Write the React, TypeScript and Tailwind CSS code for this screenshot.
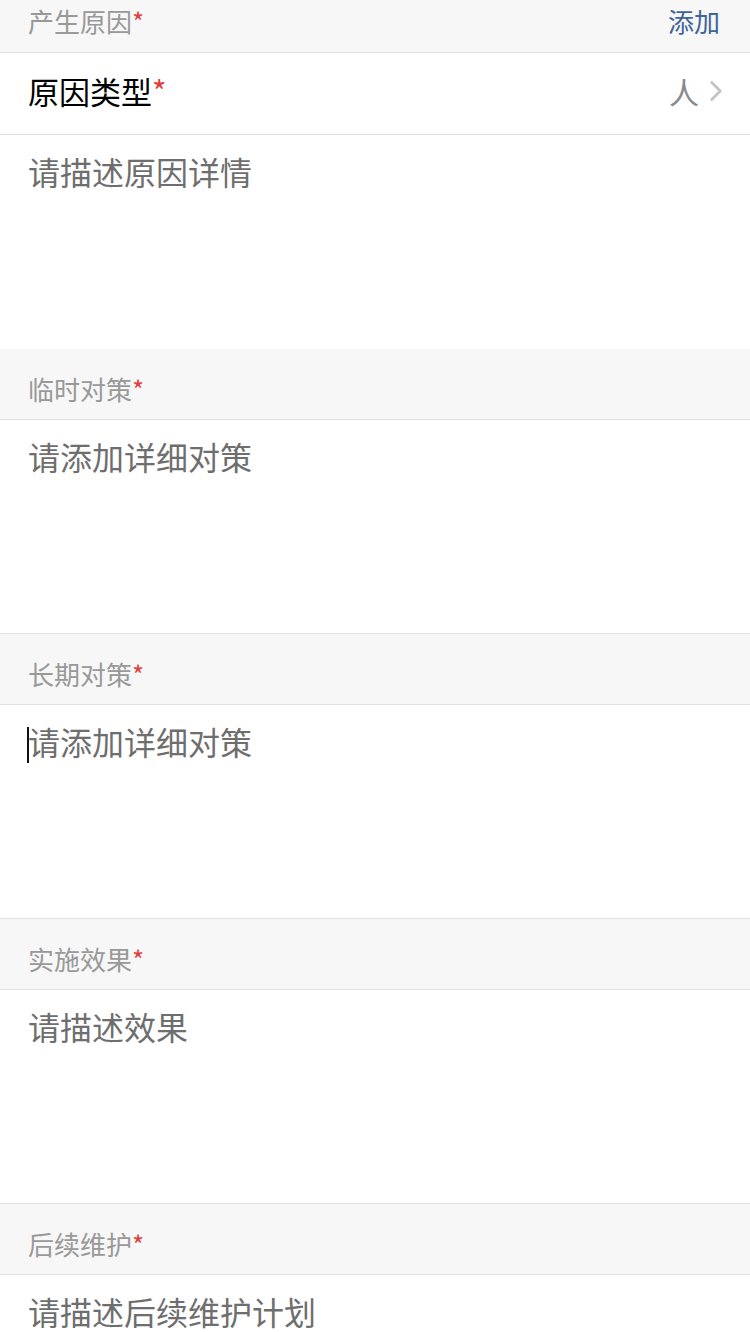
import { ChevronRight } from "lucide-react";

const font = { fontFamily: '"Noto Sans CJK SC", "Noto Sans", sans-serif' };

function Star() {
  return <span className="text-[#e0403a]">*</span>;
}

function SectionHeader({ title, top = false }: { title: string; top?: boolean }) {
  return (
    <div
      className={
        "h-[71px] bg-[#f7f7f7] border-b border-[#e0e0e0] px-[28px] pt-[22px] text-[26px] leading-[36px] text-[#999999]" +
        (top ? " border-t" : "")
      }
    >
      {title}
      <Star />
    </div>
  );
}

function Area({ placeholder, cursor = false, first = false }: { placeholder: string; cursor?: boolean; first?: boolean }) {
  return (
    <div
      className={
        "bg-white px-[28px] pt-[16px] text-[32px] leading-[40px] text-[#6e6e6e]" +
        (first ? " h-[214px]" : " h-[213px]")
      }
    >
      {cursor && <span className="inline-block w-[2px] h-[36px] bg-[#111] align-[-8px] -ml-[1px] -mr-[1px]" />}
      {placeholder}
    </div>
  );
}

export default function App() {
  return (
    <div className="w-[750px] h-[1332px] overflow-hidden bg-white" style={font}>
      <div className="h-[53px] bg-[#f7f7f7] border-b border-[#e0e0e0] px-[28px] pt-[3px] flex justify-between text-[26px] leading-[36px]">
        <div className="text-[#999999]">
          产生原因
          <Star />
        </div>
        <div className="text-[#3d6498] pr-[2px]">添加</div>
      </div>
      <div className="h-[82px] border-b border-[#e0e0e0] pl-[28px] pr-[28px] flex items-center justify-between">
        <div className="text-[31px] leading-[40px] text-black -mt-[6px]">
          原因类型
          <Star />
        </div>
        <div className="flex items-center -mt-[6px]">
          <span className="text-[30px] leading-[40px] text-[#8a8a8a]">人</span>
          <ChevronRight className="w-[34px] h-[34px] text-[#c4c4c8] -mr-[11px]" strokeWidth={2} />
        </div>
      </div>
      <Area placeholder="请描述原因详情" first />
      <SectionHeader title="临时对策" />
      <div className="border-b border-[#e0e0e0]">
        <Area placeholder="请添加详细对策" />
      </div>
      <SectionHeader title="长期对策" />
      <div className="border-b border-[#e0e0e0]">
        <Area placeholder="请添加详细对策" cursor />
      </div>
      <SectionHeader title="实施效果" />
      <div className="border-b border-[#e0e0e0]">
        <Area placeholder="请描述效果" />
      </div>
      <SectionHeader title="后续维护" />
      <Area placeholder="请描述后续维护计划" />
    </div>
  );
}
